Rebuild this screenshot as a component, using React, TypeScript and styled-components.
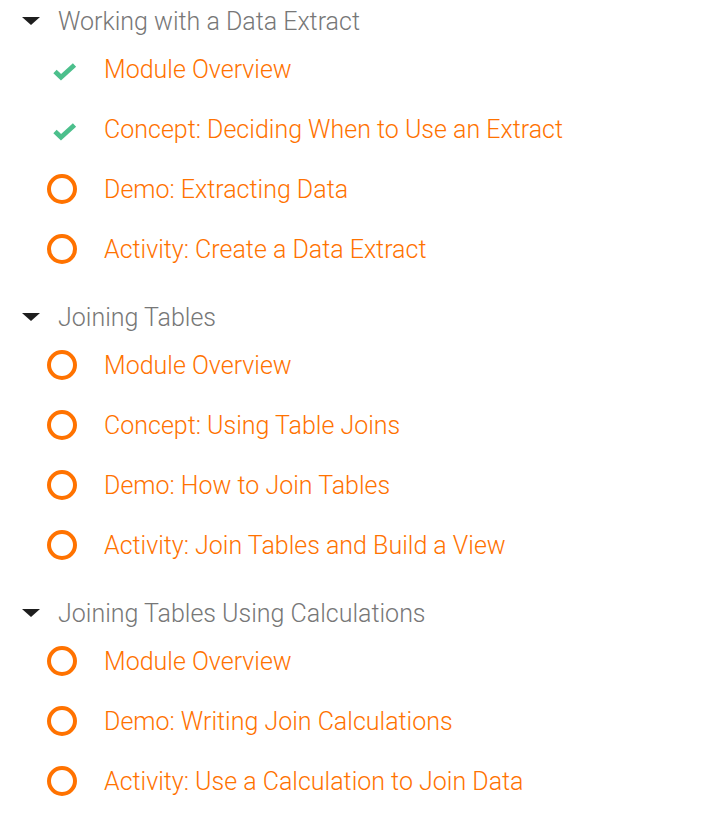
import React from "react";
import styled, { createGlobalStyle } from "styled-components";

const Global = createGlobalStyle`
  html, body { margin: 0; padding: 0; background: #ffffff; }
  body { font-family: Roboto, "Noto Sans", Arial, sans-serif; }
`;

const Page = styled.div`
  display: flex;
  flex-direction: column;
  gap: 20px;
  padding-top: 3px;
`;

const Section = styled.section`
  display: flex;
  flex-direction: column;
`;

const Header = styled.div`
  display: flex;
  align-items: center;
  height: 36px;
  padding-left: 22px;
`;

const Caret = styled.span`
  width: 0;
  height: 0;
  border-left: 9px solid transparent;
  border-right: 9px solid transparent;
  border-top: 8px solid #1e1e1e;
  margin-right: 18px;
`;

const Title = styled.span`
  font-size: 25px;
  color: #777777;
  font-weight: 300;
`;

const Items = styled.ul`
  list-style: none;
  margin: 0;
  padding: 0;
`;

const Item = styled.li`
  display: flex;
  align-items: center;
  height: 60px;
  padding-left: 47px;
`;

const IconBox = styled.span`
  width: 30px;
  height: 30px;
  display: flex;
  align-items: center;
  justify-content: center;
  margin-right: 27px;
  flex-shrink: 0;
`;

const Ring = styled.span`
  width: 30px;
  height: 30px;
  box-sizing: border-box;
  border: 4.5px solid #ff7200;
  border-radius: 50%;
`;

const Label = styled.span`
  font-size: 25px;
  color: #ff7200;
  font-weight: 300;
`;

const Check = () => (
  <svg width="30" height="30" viewBox="0 0 30 30">
    <path d="M8 17.5 L14 23.2 L27.5 11" fill="none" stroke="#4cbf8c" strokeWidth="4.8" strokeLinecap="butt" strokeLinejoin="miter" />
  </svg>
);

type Lesson = { title: string; done?: boolean };
type Module = { title: string; lessons: Lesson[] };

const data: Module[] = [
  {
    title: "Working with a Data Extract",
    lessons: [
      { title: "Module Overview", done: true },
      { title: "Concept: Deciding When to Use an Extract", done: true },
      { title: "Demo: Extracting Data" },
      { title: "Activity: Create a Data Extract" },
    ],
  },
  {
    title: "Joining Tables",
    lessons: [
      { title: "Module Overview" },
      { title: "Concept: Using Table Joins" },
      { title: "Demo: How to Join Tables" },
      { title: "Activity: Join Tables and Build a View" },
    ],
  },
  {
    title: "Joining Tables Using Calculations",
    lessons: [
      { title: "Module Overview" },
      { title: "Demo: Writing Join Calculations" },
      { title: "Activity: Use a Calculation to Join Data" },
    ],
  },
];

export default function App() {
  return (
    <>
      <Global />
      <Page>
        {data.map((m) => (
          <Section key={m.title}>
            <Header>
              <Caret />
              <Title>{m.title}</Title>
            </Header>
            <Items>
              {m.lessons.map((l) => (
                <Item key={l.title}>
                  <IconBox>{l.done ? <Check /> : <Ring />}</IconBox>
                  <Label>{l.title}</Label>
                </Item>
              ))}
            </Items>
          </Section>
        ))}
      </Page>
    </>
  );
}
